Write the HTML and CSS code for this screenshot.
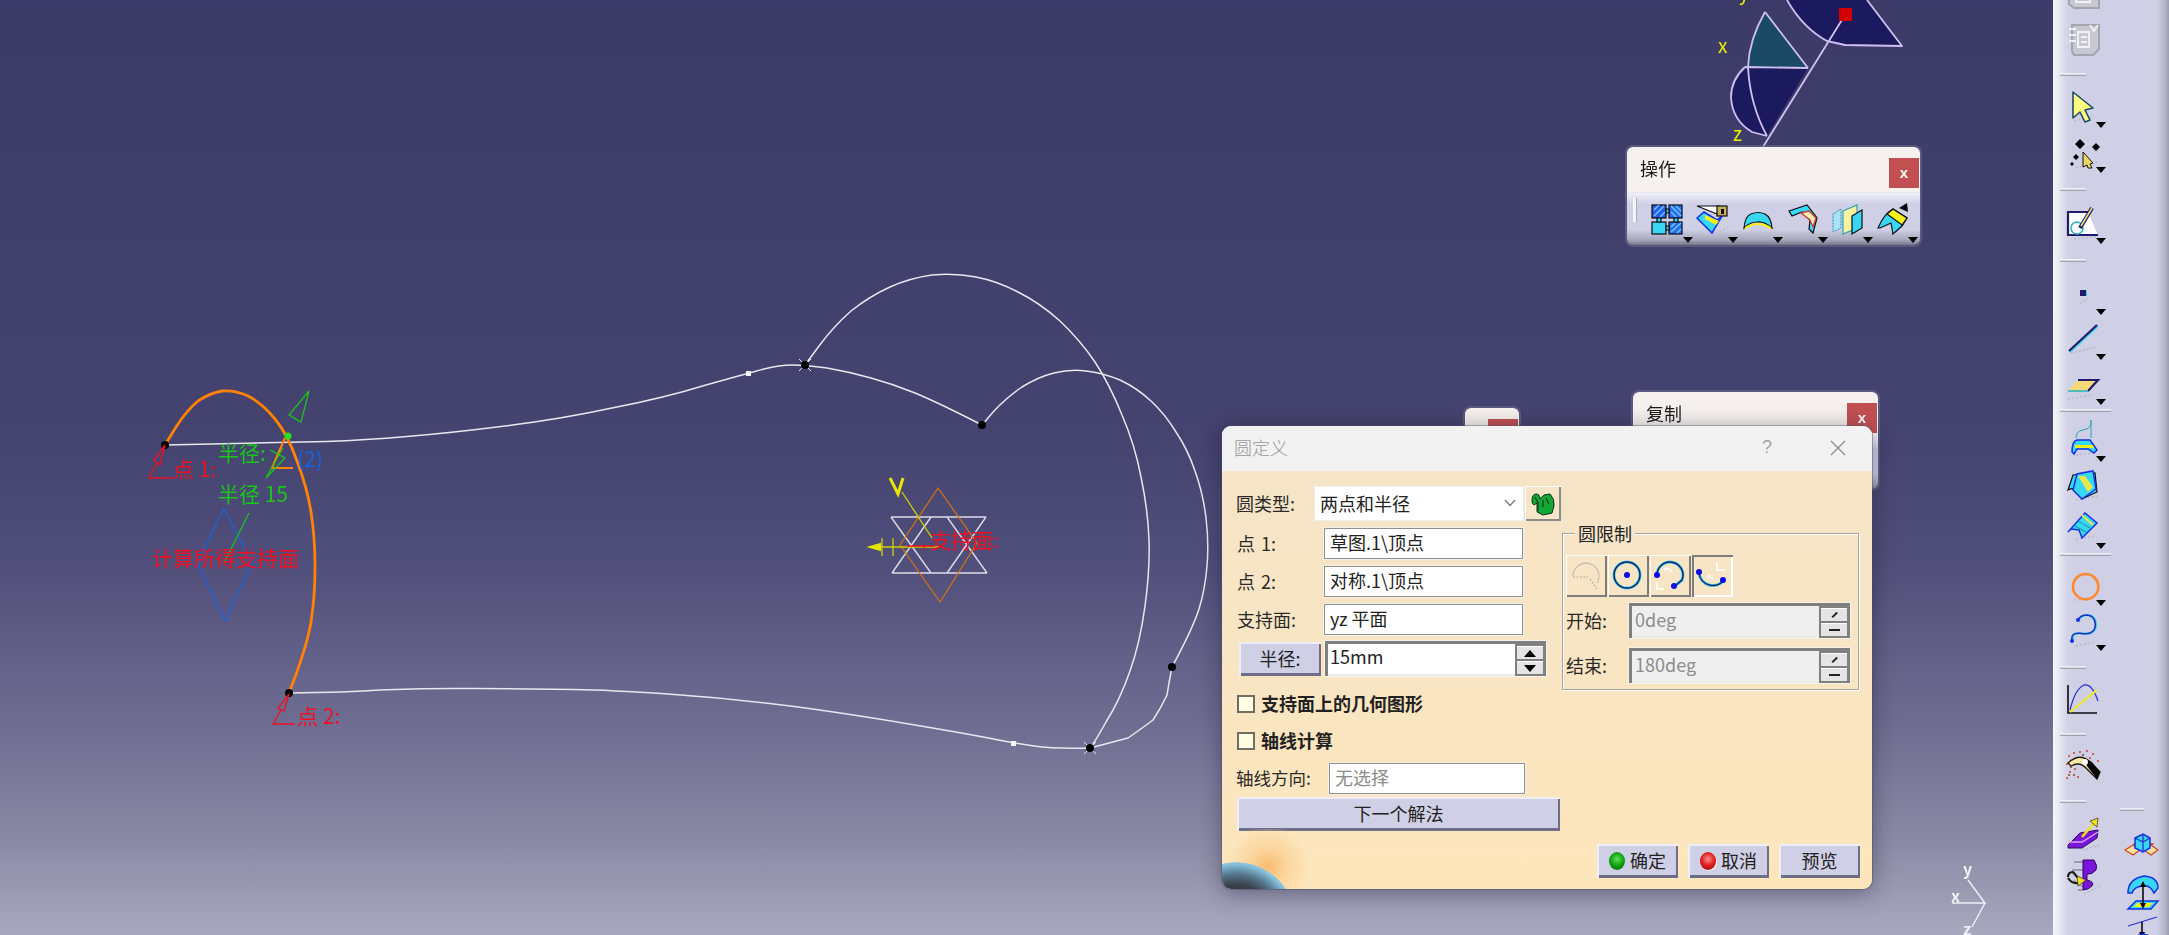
FILE: index.html
```html
<!DOCTYPE html>
<html lang="zh-CN">
<head>
<meta charset="utf-8">
<title>圆定义</title>
<link rel="stylesheet" href="styles.css">
</head>
<body>
<main class="viewport">
  <svg class="scene" width="2053" height="935" viewBox="0 0 2053 935">
    <!-- compass -->
    <path class="cp-dark" d="M1787 0Q1803 28 1827 41L1845 45L1902 46L1867 0Z"/>
    <path class="cp-teal" d="M1765 12Q1749 40 1748 67L1808 68Z"/>
    <path class="cp-dark" d="M1745 67L1808 68L1767 136L1752 132Q1732 120 1731 97Q1731 80 1745 67Z"/>
    <path class="cp-line" d="M1787 0Q1803 28 1827 41L1845 45L1902 46L1867 0M1845 15L1763 147M1765 12Q1749 40 1748 67Q1750 105 1767 136M1765 12L1808 68M1745 67L1808 68M1745 67Q1731 80 1731 97Q1732 120 1752 132L1767 136"/>
    <rect class="cp-red" x="1839" y="8" width="13" height="13"/>
    <text class="t-axis" x="1718" y="53">x</text>
    <text class="t-axis" x="1733" y="141">z</text>
    <text class="t-axis" x="1739" y="0">y</text>

    <!-- wireframe -->
    <path class="wire" d="M165 445L326 441.5Q365 440 407 436.5Q450 433 505 426Q561 419 612 408Q664 398 706 385Q749 373 764 369Q780 365 792 365Q805 365 827 368Q850 372 871 378Q893 384 915 393Q937 402 982 425"/>
    <path class="wire" d="M805 365L819 346Q833 327 851 311Q870 296 890 287Q910 278 932 275Q955 273 976 277Q997 281 1018 292Q1040 303 1060 321Q1080 340 1095 362Q1110 385 1122 415Q1135 445 1141 477Q1148 510 1149 540Q1150 570 1145 606Q1140 643 1130 671Q1120 700 1106 722Q1093 745 1090 748"/>
    <path class="wire" d="M982 425L994 411Q1007 397 1022 387Q1038 377 1054 373Q1070 369 1086 371Q1103 373 1120 380Q1137 388 1151 401Q1165 414 1176 432Q1188 450 1195 471Q1203 493 1206 518Q1209 543 1207 566Q1205 590 1199 609Q1193 628 1172 667Q1169 682 1167 695Q1161 708 1153 720Q1141 729 1128 738L1090 748"/>
    <path class="wire" d="M289 693L317 692.5Q345 692 380 690Q416 688 477 688.5Q539 689 574 689.5Q610 690 668 694Q726 698 782 705Q838 712 909 724Q980 736 996 739.5Q1013 743 1034 746Q1055 749 1090 748"/>
    <rect class="wdot" x="746" y="371" width="5" height="5"/>
    <rect class="wdot" x="1011" y="741" width="5" height="5"/>
    <path class="thin" d="M799 359L811 371M811 359L799 371M1084 742L1096 754M1096 742L1084 754"/>
    <circle class="node" cx="805" cy="365" r="4"/>
    <circle class="node" cx="982" cy="425" r="4"/>
    <circle class="node" cx="1172" cy="667" r="4"/>
    <circle class="node" cx="1090" cy="748" r="4"/>

    <!-- circle preview -->
    <path class="orange" d="M165 445L176 427Q187 410 198 401Q210 393 222 391Q235 390 248 396Q262 403 275 419Q288 435 297 461Q307 487 311 512Q315 537 315 567Q315 597 311 622Q307 647 289 693"/>
    <circle class="node" cx="165" cy="445" r="4"/>
    <circle class="node" cx="289" cy="693" r="4"/>
    <path class="orange-m" d="M285 438L272 468H293"/>
    <path class="blue-l" d="M224 509L252 563L225 621L197 563Z"/>
    <path class="green-l" d="M249 513L224 563M309 391L289 415L301 422ZM283 448L266 478L285 458L270 450"/>
    <circle class="gdot" cx="288" cy="436" r="3.5"/>
    <path class="red-l" d="M165 445L154 460L160 465ZM157 463L149 478H172M289 694L278 708L284 711ZM281 710L273 724H295"/>
    <text class="t-green" x="218" y="461">半径:</text>
    <text class="t-green" x="218" y="502">半径 15</text>
    <text class="t-blue" x="297" y="467">(2)</text>
    <text class="t-red" x="173" y="477">点 1:</text>
    <text class="t-red" x="297" y="724">点 2:</text>
    <text class="t-red" x="152" y="566">计算所得支持面</text>

    <!-- support plane marker -->
    <path class="star" d="M891 517H986M892 573H987M891 517L931 573M931 517L892 573M947 517L987 573M986 517L947 573"/>
    <path class="orange-t" d="M938 488L977 543L940 602L900 545Z"/>
    <path class="yellow-t" d="M902 492L932 538M872 547H940M882 538V556M893 538V556"/>
    <path class="yellow-v" d="M890 478L898 494L903 478"/>
    <path class="yellow-b" d="M870 547L880 544V550Z"/>
    <path class="red-l" d="M907 546H935M924 550V546H934"/>
    <text class="t-red" x="930" y="548">支持面:</text>

    <!-- view axes -->
    <path class="axis-l" d="M1968 880L1985 903L1952 903M1985 903L1972 927"/>
    <text class="t-white" x="1963" y="875">y</text>
    <text class="t-white" x="1951" y="902">x</text>
    <text class="t-white" x="1963" y="935">z</text>
  </svg>

  <!-- floating toolbars -->
  <section class="tb tb-ops">
    <header class="tb-head"><span>操作</span><b class="tb-close">x</b></header>
    <div class="tb-bar">
      <i class="handle"></i>
      <div class="tb-item drop"><svg class="ic" viewBox="0 0 44 44"><path class="gh" d="M14 36L34 33"/><rect class="k fb1" x="5" y="7" width="14" height="13"/><rect class="k fb2" x="22" y="7" width="13" height="13"/><rect class="k fc" x="5" y="24" width="14" height="12"/><rect class="k fb2" x="22" y="24" width="13" height="12"/><path class="hatch" d="M7 12L12 7M7 18L17 8M13 19L18 14M24 8L34 18M24 14L29 19M29 8L34 13M24 34L34 25M24 29L28 25M30 35L34 31"/><path class="k fc" d="M10 20h4v4h-4zM19 11h3v4h-3zM19 28h3v4h-3zM27 20h4v4h-4z"/></svg></div>
      <div class="tb-item drop"><svg class="ic" viewBox="0 0 44 44"><path class="gh" d="M20 36L36 30"/><path class="k fw" d="M5 8L25 16L27 8Z"/><path class="b fc" d="M5 20L12 14L25 22L30 18L20 35Z"/><path class="fy" d="M13 17L27 23L24 27L13 21Z"/><rect class="k fg" x="25" y="8" width="10" height="10"/><rect class="fdk" x="29" y="11" width="3" height="5"/></svg></div>
      <div class="tb-item drop"><svg class="ic" viewBox="0 0 44 44"><path class="gh" d="M8 36L34 35"/><path class="k fc" d="M7 30Q8 18 14 16Q21 13 28 16Q34 19 35 30Q27 23 20 24Q13 24 7 30Z"/><path class="fy" d="M8 29Q14 25 21 25Q28 25 34 29L34 32Q27 27 21 27Q14 27 8 32Z"/></svg></div>
      <div class="tb-item drop"><svg class="ic" viewBox="0 0 44 44"><path class="gh" d="M18 36L32 34"/><path class="k fc" d="M7 13L25 7L35 20L31 35L27 31L28 22L20 14L10 18Z"/><path class="rs fp" d="M19 15L27 13L34 20L31 29L28 22Z"/></svg></div>
      <div class="tb-item drop"><svg class="ic" viewBox="0 0 44 44"><path class="dotb" d="M6 16L14 11V30L6 34Z"/><path class="t fp2" d="M16 13L30 7V30L16 36Z"/><path class="k fc" d="M25 18L35 12V30L25 36Z"/></svg></div>
      <div class="tb-item drop"><svg class="ic" viewBox="0 0 44 44"><path class="k fc" d="M6 30Q12 16 21 11L35 20L30 28L21 36L19 25L8 30Z"/><path class="k fy" d="M15 16L21 11L35 20L30 27Z"/><path class="fdk" d="M27 10L35 5L36 14Z"/><path class="gh" d="M10 36L28 36"/></svg></div>
    </div>
  </section>

  <section class="tb tb-copy">
    <header class="tb-head"><span>复制</span><b class="tb-close">x</b></header>
    <div class="tb-bar"></div>
  </section>

  <section class="tb tb-mini">
    <header class="tb-head"><span>+</span><b class="tb-close">x</b></header>
  </section>

  <!-- dialog -->
  <section class="dialog">
    <header class="dlg-title">
      <span class="dlg-name">圆定义</span>
      <span class="dlg-help">?</span>
      <svg class="dlg-x" width="16" height="16" viewBox="0 0 16 16"><path d="M1 1L15 15M15 1L1 15"/></svg>
    </header>
    <div class="dlg-body">
      <div class="form">
        <div class="row row-combo">
          <label class="lbl w-type">圆类型:</label>
          <div class="combo"><span>两点和半径</span><svg width="12" height="8" viewBox="0 0 12 8"><path d="M1 1L6 6.5L11 1"/></svg></div>
          <div class="ibtn"><svg width="26" height="24" viewBox="0 0 26 24"><path class="k-g" d="M2 9Q2 2 6 2Q10 2 10 7L14 3L20 2Q25 7 24 14L22 21L13 23L7 20L7 11L4 13Q2 12 2 9Z"/><path class="k-d" d="M5 5L8 11L8 19M16 6L19 12M13 8V15"/></svg></div>
        </div>
        <div class="row row-f">
          <label class="lbl w-pt">点 1:</label>
          <div class="field">草图.1\顶点</div>
        </div>
        <div class="row row-f">
          <label class="lbl w-pt">点 2:</label>
          <div class="field">对称.1\顶点</div>
        </div>
        <div class="row row-f">
          <label class="lbl w-pt">支持面:</label>
          <div class="field">yz 平面</div>
        </div>
        <div class="row row-r">
          <button class="btn btn-r">半径:</button>
          <div class="spin spin-r"><span class="spin-v">15mm</span>
            <div class="spin-bs"><i class="sb"><u class="up"></u></i><i class="sb"><u class="dn"></u></i></div>
          </div>
        </div>
        <div class="row row-c"><i class="chk"></i><span class="chk-t">支持面上的几何图形</span></div>
        <div class="row row-c"><i class="chk"></i><span class="chk-t">轴线计算</span></div>
        <div class="row row-a">
          <label class="lbl w-ax">轴线方向:</label>
          <div class="field field-a">无选择</div>
        </div>
        <button class="btn btn-next">下一个解法</button>
      </div>
      <fieldset class="limits">
        <legend>圆限制</legend>
        <div class="modes">
          <div class="mode"><svg viewBox="0 0 41 42"><path class="m-g" d="M7 21A13 13 0 1 1 31 28"/><path class="m-gd" d="M7 22H22M24 24L31 34"/></svg></div>
          <div class="mode"><svg viewBox="0 0 41 42"><circle class="m-c" cx="19" cy="20" r="13"/><circle class="m-n" cx="19" cy="20" r="13"/><circle class="m-d" cx="19" cy="20" r="3"/></svg></div>
          <div class="mode"><svg viewBox="0 0 41 42"><path class="m-c" d="M7 21A13 13 0 1 1 32 25L25 31"/><path class="m-n" d="M7 21A13 13 0 1 1 32 25L25 31"/><path class="m-w" d="M7 27V34H14M18 13L22 17M18 13L14 15"/><circle class="m-d" cx="7" cy="20" r="3"/><circle class="m-d" cx="24" cy="31" r="3"/></svg></div>
          <div class="mode mode-on"><svg viewBox="0 0 41 42"><path class="m-c" d="M7 18A14 14 0 0 0 32 25"/><path class="m-n" d="M7 18A14 14 0 0 0 32 25"/><path class="m-w" d="M25 7V15H33M17 20L21 25M17 20L15 24"/><circle class="m-d" cx="7" cy="17" r="3"/><circle class="m-d" cx="31" cy="25" r="3"/></svg></div>
        </div>
        <div class="lim-row">
          <label class="lbl w-lim">开始:</label>
          <div class="spin spin-d"><span class="spin-v">0deg</span>
            <div class="spin-bs"><i class="sb"><s class="tick"></s></i><i class="sb"><s class="dash"></s></i></div>
          </div>
        </div>
        <div class="lim-row">
          <label class="lbl w-lim">结束:</label>
          <div class="spin spin-d"><span class="spin-v">180deg</span>
            <div class="spin-bs"><i class="sb"><s class="tick"></s></i><i class="sb"><s class="dash"></s></i></div>
          </div>
        </div>
      </fieldset>
    </div>
    <footer class="dlg-foot">
      <button class="btn btn-a"><i class="ball ball-g"></i>确定</button>
      <button class="btn btn-a"><i class="ball ball-r"></i>取消</button>
      <button class="btn btn-a">预览</button>
    </footer>
    <div class="planet"></div>
  </section>
</main>

<aside class="rail">
  <div class="rail-col col-a">
    <div class="it"><svg class="ic" viewBox="0 0 44 44"><path class="grey" d="M9 11H34L39 16V38H14L9 34Z"/><path class="grey-d" d="M16 18H30V32H16ZM20 14V24H27V14"/></svg></div>
    <div class="it"><svg class="ic" viewBox="0 0 44 44"><path class="grey" d="M12 10H39V34L33 40H14L12 36Z"/><path class="grey-d" d="M9 14H16M9 20H16M9 26H16M18 17H29V32H18ZM21 22H27M21 27H27M30 10L34 16L38 10"/></svg></div>
    <hr class="sep sp1">
    <div class="it drop"><svg class="ic" viewBox="0 0 44 44"><path class="gh" d="M14 38L34 33"/><path class="cur" d="M13 9L33 25L25 27L30 37L25 39L20 29L13 35Z"/></svg></div>
    <div class="it drop"><svg class="ic" viewBox="0 0 44 44"><path class="gh" d="M16 40L38 34"/><path class="fdk" d="M20 11L25 16L20 21L15 16ZM36 15L40 19L36 23L32 19ZM16 26L19 29L16 32L13 29ZM12 34L14 36L12 38L10 36Z"/><path class="cur-s" d="M23 24L33 35L30 36L32 40L28 40L27 37L23 39Z"/></svg></div>
    <hr class="sep sp2">
    <div class="it drop"><svg class="ic" viewBox="0 0 44 44"><path class="gh" d="M14 40L36 38"/><path class="paper" d="M8 13H28L38 36H8Z"/><path class="nav-l" d="M28 13H8V36H38"/><circle class="teal-l" cx="17" cy="29" r="6"/><path class="pen" d="M32 9L20 29"/><path class="pen-y" d="M32 9L21 27"/></svg></div>
    <hr class="sep sp2">
    <div class="it drop"><svg class="ic" viewBox="0 0 44 44"><path class="gh" d="M20 33L28 29"/><rect class="cy" x="21" y="20" width="6" height="6"/><rect class="nav" x="20" y="20" width="6" height="6"/></svg></div>
    <div class="it drop"><svg class="ic" viewBox="0 0 44 44"><path class="gh" d="M11 38L37 32"/><path class="cy-l" d="M10 37L38 11"/><path class="nav-l" d="M9 36L37 10"/></svg></div>
    <div class="it drop"><svg class="ic" viewBox="0 0 44 44"><path class="gh" d="M8 39L33 35"/><path class="plane" d="M8 31L18 20H38L28 31Z"/><path class="nav-l" d="M18 20H38L28 31"/><path class="teal-l" d="M8 31H28"/></svg></div>
    <hr class="sep sp3">
    <div class="it drop"><svg class="ic" viewBox="0 0 44 44"><path class="gh" d="M16 38L34 36"/><path class="teal-t" d="M16 21Q16 14 23 13Q32 12 31 3V21"/><path class="b fc" d="M12 35Q12 24 17 23H30L37 33L34 36L28 32H17L14 37Z"/><path class="fy" d="M15 28H33L34 31H15Z"/></svg></div>
    <div class="it it-s"><svg class="ic" viewBox="0 0 44 44"><path class="gh" d="M16 38L38 34"/><path class="k fc" d="M8 28L13 13L35 11L37 30L22 37L20 29Q14 25 8 28Z"/><path class="b fc" d="M13 28L17 12L33 9L36 27L22 37Z"/><path class="fy2" d="M18 14L25 14L33 25L28 30Z"/></svg></div>
    <div class="it drop"><svg class="ic" viewBox="0 0 44 44"><path class="gh" d="M16 35L36 32"/><path class="b fc" d="M8 28L25 9L37 19L22 34L19 26L11 25Z"/><path class="st1" d="M15 22L26 28M18 17L30 24"/><path class="st2" d="M22 11L33 21"/></svg></div>
    <hr class="sep sp3">
    <div class="it drop"><svg class="ic" viewBox="0 0 44 44"><path class="gh" d="M14 39L34 36"/><circle class="circ" cx="25.7" cy="25.7" r="12.7"/></svg></div>
    <div class="it drop"><svg class="ic" viewBox="0 0 44 44"><path class="gh" d="M16 40L34 36"/><path class="cy-l" d="M13 35C11 22 25 30 31 27C39 24 38 10 28 9C23 9 20 12 19 14"/><path class="blu-l" d="M12 35C10 22 24 30 30 27C38 24 37 10 27 9C22 9 19 12 18 14"/><circle class="blu" cx="12" cy="35" r="2"/><circle class="blu" cx="18" cy="14" r="2"/></svg></div>
    <hr class="sep sp4">
    <div class="it"><svg class="ic" viewBox="0 0 44 44"><path class="ax" d="M8 10V38H37"/><path class="blu-t" d="M10 35Q15 14 24 10Q32 8 38 26"/><path class="ylw-l" d="M10 37L37 15"/></svg></div>
    <hr class="sep sp5">
    <div class="it"><svg class="ic" viewBox="0 0 44 44"><path class="dots" d="M9 14h.01M14 11h.01M20 10h.01M27 9h.01M33 12h.01M7 22h.01M10 30h.01M15 27h.01M18 35h.01M7 36h.01M24 20h.01M38 19h.01M12 19h.01M30 16h.01"/><path class="dots-k" d="M16 16h.01M23 13h.01M11 25h.01M14 33h.01M9 33h.01"/><path class="arch" d="M8 21Q20 10 30 20L40 30L37 37L27 27Q20 19 11 24Z"/><path class="fdk" d="M24 16L32 20L40 30L37 37L27 24Z"/><circle class="fw" cx="25" cy="20" r="3"/></svg></div>
    <hr class="sep sp5">
    <div class="it"><svg class="ic" viewBox="0 0 44 44"><path class="gh" d="M22 41L40 36"/><path class="purple" d="M8 36L20 24L38 21L37 29L22 39H8Z"/><path class="pl-l" d="M8 33H22L38 23"/><path class="yl-a" d="M22 28L35 13"/><path class="fy3" d="M30 12L38 9L37 18Z"/></svg></div>
    <div class="it"><svg class="ic" viewBox="0 0 44 44"><path class="gh" d="M24 40L40 32"/><path class="gr-d" d="M14 8H23M12 16H23M14 26Q18 32 23 32M18 36H23"/><path class="purple" d="M23 6H34Q38 12 36 16Q32 21 27 20V26Q35 28 32 32Q28 36 23 36Z"/><path class="link" d="M8 23Q8 18 13 18L18 24M8 24Q12 30 18 29"/><path class="fy3" d="M17 22L26 26L18 32Z"/></svg></div>
  </div>
  <div class="rail-col col-b">
    <hr class="sep sp6">
    <div class="it"><svg class="ic" viewBox="0 0 44 44"><path class="dia" d="M5 26L13 21L20 26L13 31ZM24 26L31 21L38 26L31 31ZM14 20L22 16L20 24ZM24 18L33 20L26 24Z"/><path class="b fc" d="M15 14L23 10L30 14V24L23 28L15 24Z"/><path class="blu-t" d="M23 10V28M15 14L23 18L30 14"/></svg></div>
    <div class="it"><svg class="ic" viewBox="0 0 44 44"><path class="b fc" d="M8 24Q8 10 24 7Q38 8 38 19L34 24Q30 15 22 17Q14 18 12 24Z"/><path class="b fc" d="M8 40L16 32H38L31 40Z"/><path class="fy" d="M17 34H33L29 38H14Z"/><path class="ax" d="M23 15V38"/><path class="fdk" d="M20 18L23 12L26 18ZM20 34L23 40L26 34Z"/></svg></div>
    <div class="it"><svg class="ic" viewBox="0 0 44 44"><path class="blu-t" d="M8 12L37 3"/><path class="ax" d="M22 8V20"/><path class="fdk" d="M19 18L22 24L25 18Z"/><path class="b fc" d="M8 38Q10 22 23 20Q36 22 38 38Z"/><path class="ylw-l" d="M12 38Q14 26 23 24Q32 26 34 38"/></svg></div>
  </div>
</aside>
</body>
</html>
```
FILE: styles.css
```css
* { box-sizing: border-box; }
html, body { margin: 0; height: 100%; overflow: hidden; }
body {
  display: flex;
  width: 2169px;
  height: 935px;
  font-family: "Noto Sans CJK SC", "Noto Sans", sans-serif;
  color: #222;
}

/* ---------- 3D viewport ---------- */
.viewport {
  position: relative;
  flex: 0 0 2053px;
  height: 935px;
  overflow: hidden;
  background: linear-gradient(180deg, #3c3a68 0%, #45436f 47%, #504e7a 60%, #6f6e92 78%, #8a8aa6 90%, #a8a8be 100%);
}
.scene { position: absolute; left: 0; top: 0; filter: blur(.3px); }
.scene text { font-family: "Noto Sans CJK SC", sans-serif; }
.wire { fill: none; stroke: #e8e8f0; stroke-width: 1.5; stroke-linejoin: round; }
.thin { fill: none; stroke: #e6e6ee; stroke-width: 1; }
.wdot { fill: #f4f4f8; }
.node { fill: #000; }
.orange { fill: none; stroke: #ff8205; stroke-width: 2.8; stroke-linejoin: round; }
.orange-m { fill: none; stroke: #ff8205; stroke-width: 2.2; }
.orange-t { fill: none; stroke: #d9720f; stroke-width: 1.2; }
.blue-l { fill: none; stroke: #1a62e0; stroke-width: 1.3; }
.green-l { fill: none; stroke: #17c917; stroke-width: 1.2; }
.gdot { fill: #22e022; }
.red-l { fill: none; stroke: #ee1122; stroke-width: 1.3; }
.star { fill: none; stroke: #dcdcea; stroke-width: 1.4; }
.yellow-t { fill: none; stroke: #cfcf00; stroke-width: 1.3; }
.yellow-v { fill: none; stroke: #e6e600; stroke-width: 3; }
.yellow-b { fill: #e6e600; stroke: #e6e600; stroke-width: 2; }
.axis-l { fill: none; stroke: #f0f0f6; stroke-width: 1.4; }
.t-red { fill: #f01022; font-size: 21px; }
.t-green { fill: #18c818; font-size: 21px; }
.t-blue { fill: #1464e6; font-size: 21px; }
.t-axis { fill: #f2f200; font-size: 19px; }
.t-white { fill: #f0f0f6; font-size: 16px; font-weight: 700; }
.cp-dark { fill: #1c1a5e; }
.cp-teal { fill: #1b4a66; }
.cp-line { fill: none; stroke: #cfc0f0; stroke-width: 1.8; stroke-linejoin: round; }
.cp-red { fill: #d40000; }

/* ---------- floating toolbars ---------- */
.tb {
  position: absolute;
  border-radius: 6px;
  overflow: hidden;
  box-shadow: 0 0 0 2px rgba(110, 110, 140, .55);
  filter: blur(.3px);
}
.tb-ops { left: 1627px; top: 147px; width: 293px; height: 98px; }
.tb-copy { left: 1633px; top: 392px; width: 245px; height: 97px; }
.tb-mini { left: 1465px; top: 408px; width: 54px; height: 60px; }
.tb-head {
  display: flex;
  align-items: center;
  height: 45px;
  padding: 0 0 3px 13px;
  background: #f6f1ee;
  font-size: 18px;
  color: #1c1c1c;
}
.tb-close {
  align-self: flex-start;
  margin: 11px 1px 0 auto;
  width: 30px;
  height: 30px;
  background: #c25052;
  color: #fff;
  font: 700 15px/30px "Liberation Sans", sans-serif;
  text-align: center;
}
.tb-mini .tb-head { padding-left: 8px; }
.tb-bar {
  display: flex;
  height: 53px;
  padding: 5px 0 0 6px;
  background: linear-gradient(180deg, #f0f0f8 0%, #cfcfe5 22%, #cfcfe5 70%, #a8a8bc 90%, #77778a 100%);
  border-top: 1px solid #e6e6f0;
}
.handle {
  flex: none;
  width: 4px;
  height: 24px;
  margin-right: 10px;
  background: #f4f4fa;
  border-right: 1px solid #a9a9bb;
}
.tb-item { position: relative; flex: 0 0 45px; height: 45px; }
.ic { display: block; width: 44px; height: 44px; }
.drop::after {
  content: "";
  position: absolute;
  left: 36px;
  top: 39px;
  border: 5.5px solid transparent;
  border-top: 6px solid #000;
  border-bottom: 0;
}

/* ---------- right rail ---------- */
.rail {
  display: flex;
  flex: 0 0 116px;
  height: 935px;
  padding-left: 7px;
  overflow: hidden;
  background: linear-gradient(90deg, #f6f6fb 0, #d4d4e8 14px, #cfcfe5 24px, #cfcfe5 104px, #b4b4c8 112px, #9c9cb0 116px);
}
.rail-col { flex: none; display: flex; flex-direction: column; filter: blur(.3px); }
.col-a { width: 60px; margin-top: -30px; }
.col-b { width: 44px; padding-top: 808px; }
.it { position: relative; flex: none; height: 45px; }
.it-s { height: 42px; }
.sep {
  flex: none;
  width: 26px;
  height: 3px;
  border: 0;
  border-top: 1px solid #f0f0f8;
  border-bottom: 1px solid #a4a4b0;
  background: #d8d8e4;
}
.sp1 { margin: 13px 0 7px; }
.sp2 { margin: 15px 0 8px; }
.sp3 { width: 51px; margin: 4px 0 5px; }
.sp4 { margin: 15px 0 6px; }
.sp5 { margin: 13px 0 6px; }
.sp6 { width: 24px; margin: 0 0 13px; }

/* icon paints */
.gh { fill: none; stroke: #b9b9c9; stroke-width: 1.5; stroke-dasharray: 2 2; }
.k { stroke: #0c0c14; stroke-width: 1.2; }
.b { stroke: #1430e8; stroke-width: 1.5; }
.t { stroke: #2aa6b0; stroke-width: 1.2; }
.rs { stroke: #d23a3a; stroke-width: 1.3; }
.fb1 { fill: #2a5cf0; }
.fb2 { fill: #2a6cf4; }
.hatch { fill: none; stroke: #6ed0fa; stroke-width: 1.3; }
.fc { fill: #38d8f4; }
.fw { fill: #fff; }
.fy { fill: #f6f018; }
.fy2 { fill: #e8e84a; }
.fy3 { fill: #f0e020; stroke: #111; stroke-width: .6; }
.fg { fill: #c8b050; }
.fdk { fill: #060608; }
.fp { fill: #fbeeb0; }
.fp2 { fill: #f6f2a0; }
.dotb { fill: #a8e4f4; stroke: #2a90c0; stroke-width: 1; stroke-dasharray: 2 1; }
.grey { fill: #c8c8d2; stroke: #a4a4ae; stroke-width: 2; }
.grey-d { fill: none; stroke: #f0f0f6; stroke-width: 2; }
.cur { fill: #ffff80; stroke: #1c4a6a; stroke-width: 1.6; stroke-linejoin: round; }
.cur-s { fill: #e8d860; stroke: #111; stroke-width: 1; }
.paper { fill: #fff; }
.nav-l { fill: none; stroke: #1e1c6a; stroke-width: 2.2; }
.cy-l { fill: none; stroke: #3cd8ee; stroke-width: 2; }
.teal-l { fill: none; stroke: #2ab6c0; stroke-width: 1.6; }
.teal-t { fill: none; stroke: #2aa6b0; stroke-width: 1; }
.pen { fill: none; stroke: #1e1c6a; stroke-width: 4; }
.pen-y { fill: none; stroke: #f0e070; stroke-width: 1.6; }
.cy { fill: #3cd8ee; }
.nav { fill: #1e1c6a; }
.plane { fill: #f8d878; }
.st1 { fill: none; stroke: #1c9ca8; stroke-width: 1.3; }
.st2 { fill: none; stroke: #e8e84a; stroke-width: 2; }
.circ { fill: none; stroke: #ff8a2e; stroke-width: 2.6; }
.blu-l { fill: none; stroke: #1430c8; stroke-width: 1.6; }
.blu { fill: #1430e0; }
.blu-t { fill: none; stroke: #2830d8; stroke-width: 1.3; }
.ax { fill: none; stroke: #0c0c14; stroke-width: 1.6; }
.ylw-l { fill: none; stroke: #f2ea22; stroke-width: 2; }
.dots { fill: none; stroke: #d83a2a; stroke-width: 2; stroke-linecap: round; }
.dots-k { fill: none; stroke: #7a5010; stroke-width: 2; stroke-linecap: round; }
.arch { fill: #f6e8a8; stroke: #2a1c10; stroke-width: 1.4; }
.purple { fill: #7a14d8; stroke: #2c0a5a; stroke-width: 1; }
.pl-l { fill: none; stroke: #d8a8f8; stroke-width: 1.3; }
.yl-a { fill: none; stroke: #f0e020; stroke-width: 2.6; }
.gr-d { fill: none; stroke: #8c8c98; stroke-width: 1.3; }
.link { fill: none; stroke: #1a1a10; stroke-width: 2.2; }
.dia { fill: #fce0a0; stroke: #d84020; stroke-width: 1.2; }

/* ---------- dialog ---------- */
.dialog {
  position: absolute;
  left: 1222px;
  top: 426px;
  width: 650px;
  height: 463px;
  border-radius: 9px;
  overflow: hidden;
  background: linear-gradient(180deg, #f5e4c8 0, #f8e5c4 45%, #fee6bb 100%);
  box-shadow: 0 3px 22px rgba(20, 20, 40, .42), 0 0 0 1px rgba(90, 90, 120, .4);
}
.dlg-title {
  display: flex;
  align-items: center;
  height: 45px;
  padding: 0 26px 3px 12px;
  background: #f2f2f2;
}
.dlg-name { font-size: 18px; font-weight: 300; color: #969696; }
.dlg-help { margin-left: auto; margin-right: 58px; font-size: 18px; color: #a4a4a4; font-family: "Liberation Sans", sans-serif; }
.dlg-x { margin-top: 2px; }
.dlg-x path { fill: none; stroke: #8a8a8a; stroke-width: 1.2; }
.dlg-body { display: flex; height: 360px; padding: 15px 0 0 14px; }
.form { flex: 0 0 326px; display: flex; flex-direction: column; }
.row { display: flex; align-items: center; }
.row-combo { height: 35px; }
.row-f { height: 31px; margin-top: 7px; }
.row-r { height: 35px; margin-top: 6px; }
.row-c { height: 37px; }
.row-r + .row-c { margin-top: 9px; }
.row-a { height: 31px; margin-top: 4px; }
.lbl { flex: none; padding-bottom: 2px; font-size: 18px; color: #2a2a2a; white-space: nowrap; }
.w-type { width: 78px; }
.w-pt { width: 88px; padding-left: 1px; word-spacing: 2px; }
.w-ax { width: 93px; font-size: 17.5px; }
.w-lim { width: 63px; }
.combo {
  display: flex;
  align-items: center;
  justify-content: space-between;
  flex: none;
  width: 210px;
  height: 35px;
  padding: 0 7px 2px 5px;
  background: #fff;
  border: 1px solid #efefef;
  font-size: 18px;
}
.combo path { fill: none; stroke: #777; stroke-width: 1.2; }
.ibtn {
  display: flex;
  align-items: center;
  justify-content: center;
  flex: none;
  width: 36px;
  height: 35px;
  margin-left: 1px;
  background: #f6e5c8;
  box-shadow: inset 1px 1px 0 #fff, inset -2px -2px 0 #8a8a8a;
}
.k-g { fill: #12a838; stroke: #0c2c10; stroke-width: 1; }
.k-d { fill: none; stroke: #0c3c14; stroke-width: 1.2; }
.field {
  flex: none;
  width: 199px;
  height: 31px;
  padding-left: 5px;
  background: #fff;
  border: 1px solid #909090;
  box-shadow: 0 0 0 1px #f4f0e6;
  font-size: 18px;
  line-height: 26px;
  white-space: nowrap;
}
.field-a { width: 196px; color: #8c8c8c; }
.btn {
  display: block;
  padding: 0 0 2px;
  border: 0;
  background: #cfcfe5;
  box-shadow: inset 2px 2px 0 #eeeef8, inset -2px -3px 0 #6e6e88;
  font-family: inherit;
  font-size: 18px;
  color: #222;
}
.btn-r { flex: none; width: 82px; height: 34px; margin: 0 4px 0 3px; }
.spin {
  display: flex;
  flex: none;
  background: #fff;
  border: solid #808080;
  border-width: 3px 3px 0 3px;
  box-shadow: 0 0 0 1px #f6f2ea, inset 0 -2px 0 #ececec;
}
.spin-r { width: 221px; height: 35px; }
.spin-v { flex: 1; padding-left: 2px; font-size: 18px; line-height: 24px; white-space: nowrap; }
.spin-bs {
  flex: none;
  display: flex;
  flex-direction: column;
  gap: 2px;
  width: 28px;
  padding: 2px 0;
  background: #808080;
}
.sb {
  display: flex;
  flex: 1;
  align-items: center;
  justify-content: center;
  background: #e4e4e4;
  border-top: 1px solid #fff;
  margin-left: 2px;
}
.up, .dn { width: 0; height: 0; border: 6px solid transparent; }
.up { border-bottom: 7px solid #000; border-top: 0; }
.dn { border-top: 7px solid #000; border-bottom: 0; }
.chk { flex: none; width: 18px; height: 18px; margin-left: 1px; background: #fffde0; border: 2px solid #6e6e66; }
.chk-t { margin-left: 6px; padding-bottom: 2px; font-size: 18px; font-weight: 700; white-space: nowrap; }
.btn-next { width: 323px; height: 34px; margin: 3px 0 0 1px; flex: none; }

.limits {
  flex: none;
  width: 297px;
  height: 169px;
  min-width: 0;
  margin: 35px 0 0 0;
  padding: 10px 3px 0;
  border: 1px solid #a8a49c;
  box-shadow: 1px 1px 0 #fff, inset 1px 1px 0 #fff;
}
.limits legend {
  margin-left: 9px;
  padding: 0 3px;
  font-size: 18px;
  line-height: 24px;
  background: #f6e5c8;
}
.modes { display: flex; gap: 1px; }
.mode {
  flex: 0 0 41px;
  height: 42px;
  box-shadow: inset 1px 1px 0 #fff, inset -2px -2px 0 #7d7d7d;
}
.mode-on { box-shadow: inset 2px 2px 0 #7d7d7d, inset -2px -2px 0 #fff; }
.mode svg { display: block; width: 41px; height: 42px; }
.m-g { fill: none; stroke: #c4c0b8; stroke-width: 1.3; }
.m-gd { fill: none; stroke: #b0aca4; stroke-width: 1.2; stroke-dasharray: 2 1.5; }
.m-c { fill: none; stroke: #38d0e8; stroke-width: 3; }
.m-n { fill: none; stroke: #1a1a6a; stroke-width: 1.4; }
.m-d { fill: #0a0ae8; }
.m-w { fill: none; stroke: #fff; stroke-width: 1.6; }
.lim-row { display: flex; align-items: center; height: 35px; margin-top: 6px; }
.lim-row + .lim-row { margin-top: 10px; }
.spin-d { width: 221px; height: 35px; background: #efefef; }
.spin-d .spin-v { color: #8c8c8c; padding-left: 3px; line-height: 27px; }
.tick, .dash { display: block; background: #222; }
.tick { width: 7px; height: 1.5px; transform: rotate(-45deg); }
.dash { width: 11px; height: 2px; }

.dlg-foot {
  display: flex;
  justify-content: flex-end;
  gap: 10px;
  padding: 13px 12px 0 0;
}
.btn-a {
  display: flex;
  align-items: center;
  justify-content: center;
  gap: 5px;
  width: 81px;
  height: 34px;
}
.ball { flex: none; width: 16px; height: 18px; margin-top: 2px; border-radius: 50%; }
.ball-g { background: radial-gradient(circle at 50% 40%, #5ee05e 0, #0da00d 50%, #066006 100%); }
.ball-r { background: radial-gradient(circle at 50% 40%, #ff9090 0, #e01818 50%, #801010 100%); box-shadow: 1px 1px 0 #eee; }
.planet {
  position: absolute;
  left: 0;
  bottom: 0;
  width: 90px;
  height: 60px;
  background:
    radial-gradient(circle 60px at 14px 93px, #2c2e34 0, #3a4048 62%, #54778e 80%, #86c0dc 96%, #8cc4dc 99%, transparent 100%),
    radial-gradient(circle 42px at 46px 38px, #fbbb72 0, #fbd7a0 48%, rgba(254, 230, 187, 0) 100%);
}
```
